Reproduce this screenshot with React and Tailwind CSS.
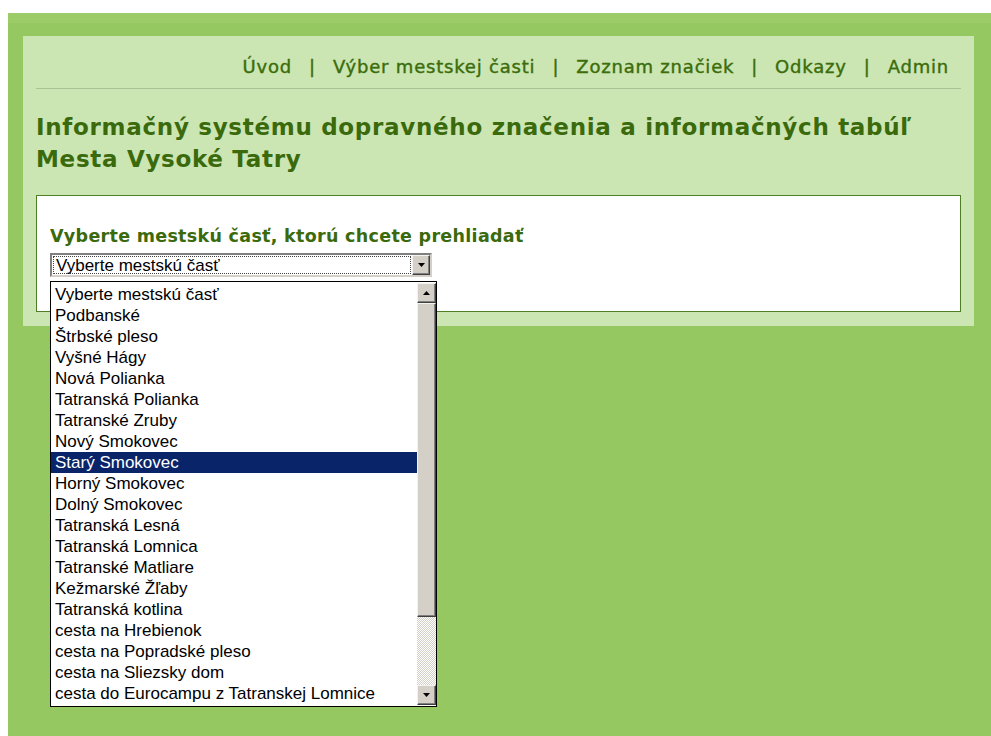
import React from "react";

const districts = [
  "Vyberte mestskú časť",
  "Podbanské",
  "Štrbské pleso",
  "Vyšné Hágy",
  "Nová Polianka",
  "Tatranská Polianka",
  "Tatranské Zruby",
  "Nový Smokovec",
  "Starý Smokovec",
  "Horný Smokovec",
  "Dolný Smokovec",
  "Tatranská Lesná",
  "Tatranská Lomnica",
  "Tatranské Matliare",
  "Kežmarské Žľaby",
  "Tatranská kotlina",
  "cesta na Hrebienok",
  "cesta na Popradské pleso",
  "cesta na Sliezsky dom",
  "cesta do Eurocampu z Tatranskej Lomnice",
];

const nav = ["Úvod", "Výber mestskej časti", "Zoznam značiek", "Odkazy", "Admin"];

function Arrow({ up }) {
  return (
    <svg width="7" height="4" viewBox="0 0 7 4">
      <path d={up ? "M3.5 0 L7 4 L0 4 Z" : "M0 0 L7 0 L3.5 4 Z"} fill="#000" />
    </svg>
  );
}

function ClassicButton({ up, className = "" }) {
  return (
    <div
      className={`flex items-center justify-center bg-[#d4d0c8] border border-t-[#f4f3ef] border-l-[#f4f3ef] border-r-[#404040] border-b-[#404040] shadow-[inset_-1px_-1px_0_#808080] ${className}`}
    >
      <Arrow up={up} />
    </div>
  );
}

export default function App() {
  return (
    <div className="relative min-h-[736px] bg-white pt-[13px] pl-[8px] font-['DejaVu_Sans',sans-serif]">
      <div className="min-h-[723px] bg-[#96c862] pt-[23px] pl-[15px] pr-[17px]">
        <div className="h-[10px] -mt-[23px] mb-[13px] -ml-[15px] -mr-[17px] bg-[#9ccc68]" />
        <div className="bg-[#cbe6b3] px-[13px] pb-[14px]">
          {/* top navigation */}
          <div className="flex justify-end items-center h-[52px] pt-[9px] pr-[12px] text-[18px] text-[#3b6d0b] tracking-[0.8px] [-webkit-text-stroke:0.4px_#3b6d0b]">
            {nav.map((item, i) => (
              <React.Fragment key={item}>
                {i > 0 && <span className="mx-[17px]">|</span>}
                <span>{item}</span>
              </React.Fragment>
            ))}
          </div>
          <div className="h-px bg-[#a9c394]" />
          <h1 className="pt-[22px] text-[23px] font-bold leading-[32px] text-[#3a6a0c] tracking-[0.7px]">
            Informačný systému dopravného značenia a informačných tabúľ
            <br />
            Mesta Vysoké Tatry
          </h1>
          {/* district picker card */}
          <div className="mt-[20px] h-[117px] bg-white border border-[#4e7f24] pl-[13px] pt-[30px]">
            <h2 className="text-[17.5px] font-bold leading-[21px] text-[#3a6a0c] tracking-[0.3px]">
              Vyberte mestskú časť, ktorú chcete prehliadať
            </h2>
            <div className="mt-[6px] flex w-[382px] h-[24px] border-2 border-t-[#808080] border-l-[#808080] border-r-[#d4d0c8] border-b-[#d4d0c8] bg-white">
              <div className="flex-1 flex items-center m-[1px] border border-dotted border-[#444] pl-[2px] font-['Liberation_Sans',sans-serif] text-[17px] text-black leading-none">
                Vyberte mestskú časť
              </div>
              <ClassicButton className="w-[18px] h-[20px]" />
            </div>
          </div>
        </div>
      </div>

      {/* open dropdown list */}
      <div className="absolute left-[50px] top-[281px] w-[387px] h-[426px] flex bg-white border border-black font-['Liberation_Sans',sans-serif] text-[17px] text-black">
        <ul className="flex-1 pt-[2px]">
          {districts.map((d) => (
            <li
              key={d}
              className={`h-[21px] leading-[21px] pl-[4px] whitespace-nowrap ${
                d === "Starý Smokovec" ? "bg-[#0a246a] text-white" : ""
              }`}
            >
              {d}
            </li>
          ))}
        </ul>
        <div className="w-[19px] flex flex-col">
          <ClassicButton up className="h-[20px] mt-[1px]" />
          <div className="h-[314px] bg-[#d4d0c8] border border-t-[#f4f3ef] border-l-[#f4f3ef] border-r-[#404040] border-b-[#404040] shadow-[inset_-1px_-1px_0_#808080]" />
          <div className="flex-1 bg-[repeating-conic-gradient(#d4d0c8_0_25%,#ffffff_0_50%)] bg-[length:2px_2px]" />
          <ClassicButton className="h-[20px] mb-[1px]" />
        </div>
      </div>
    </div>
  );
}
